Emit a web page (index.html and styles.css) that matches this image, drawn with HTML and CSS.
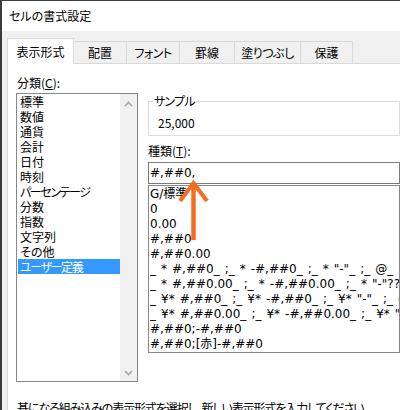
FILE: index.html
```html
<!DOCTYPE html>
<html lang="ja">
<head>
<meta charset="utf-8">
<link rel="stylesheet" href="styles.css">
</head>
<body>
<div class="window">
  <div class="titlebar">セルの書式設定</div>
  <div class="tabstrip">
    <div class="tab tab-active">表示形式</div>
    <div class="tab tab-align">配置</div>
    <div class="tab tab-font">フォント</div>
    <div class="tab tab-border">罫線</div>
    <div class="tab tab-fill">塗りつぶし</div>
    <div class="tab tab-protect">保護</div>
  </div>
  <div class="panel">
    <div class="columns">
      <div class="left">
        <div class="label">分類(<u>C</u>):</div>
        <div class="listbox">
          <ul class="items">
            <li>標準</li>
            <li>数値</li>
            <li>通貨</li>
            <li>会計</li>
            <li>日付</li>
            <li>時刻</li>
            <li class="kana">パーセンテージ</li>
            <li>分数</li>
            <li>指数</li>
            <li>文字列</li>
            <li>その他</li>
            <li class="selected kana">ユーザー定義</li>
          </ul>
          <div class="scrollbar">
            <div class="sb-btn sb-up"><svg width="9" height="6" viewBox="0 0 9 6"><polyline points="1,5 4.5,1.5 8,5" fill="none" stroke="#a6a6a6" stroke-width="1.6"/></svg></div>
            <div class="sb-btn sb-down"><svg width="9" height="6" viewBox="0 0 9 6"><polyline points="1,1 4.5,4.5 8,1" fill="none" stroke="#a6a6a6" stroke-width="1.6"/></svg></div>
          </div>
        </div>
      </div>
      <div class="right">
        <fieldset class="sample">
          <legend>サンプル</legend>
          <div class="sample-value">25,000</div>
        </fieldset>
        <div class="label label-type">種類(<u>T</u>):</div>
        <div class="input">#,##0,</div>
        <ul class="typelist">
          <li>G/標準</li>
          <li>0</li>
          <li>0.00</li>
          <li>#,##0</li>
          <li>#,##0.00</li>
          <li>_ * #,##0_ ;_ * -#,##0_ ;_ * "-"_ ;_ @_ </li>
          <li>_ * #,##0.00_ ;_ * -#,##0.00_ ;_ * "-"??_ ;_ @_ </li>
          <li>_ ¥* #,##0_ ;_ ¥* -#,##0_ ;_ ¥* "-"_ ;_ @_ </li>
          <li>_ ¥* #,##0.00_ ;_ ¥* -#,##0.00_ ;_ ¥* "-"??_ ;_ @_ </li>
          <li>#,##0;-#,##0</li>
          <li>#,##0;[赤]-#,##0</li>
        </ul>
      </div>
    </div>
    <div class="hint">基になる組み込みの表示形式を選択し、新しい表示形式を入力してください。</div>
  </div>
  <svg class="arrow" width="40" height="66" viewBox="0 0 40 66">
    <polyline points="5,23 18.5,5 32,23" fill="none" stroke="#f26d21" stroke-width="4" stroke-linejoin="miter"/>
    <line x1="18.5" y1="6" x2="18.5" y2="62" stroke="#f26d21" stroke-width="4.5"/>
  </svg>
</div>
</body>
</html>
```
FILE: styles.css
```css
* { box-sizing: border-box; }
html, body { margin: 0; padding: 0; }
body {
  width: 400px;
  height: 410px;
  overflow: hidden;
  background: #fff;
  font-family: "Noto Sans CJK JP", "Noto Sans", sans-serif;
  font-size: 12px;
  color: #000;
  font-feature-settings: "palt";
}
.window {
  position: relative;
  width: 400px;
  height: 410px;
  border-top: 1px solid #3c3c3c;
  border-left: 2px solid #3c3c3c;
  background: #f0f0f0;
  display: flex;
  flex-direction: column;
  overflow: hidden;
}
.titlebar {
  height: 30px;
  flex: none;
  background: #fff;
  line-height: 30px;
  padding-left: 7px;
}
.tabstrip {
  height: 32px;
  flex: none;
  display: flex;
  align-items: flex-end;
  padding-left: 5px;
}
.tab {
  height: 22px;
  border-top: 1px solid #d9d9d9;
  border-right: 1px solid #d9d9d9;
  display: flex;
  align-items: center;
  justify-content: center;
  white-space: nowrap;
}
.tab-active {
  width: 67px;
  height: 26px;
  margin-bottom: -1px;
  background: #fff;
  border-left: 1px solid #d9d9d9;
  position: relative;
  z-index: 1;
}
.tab-align { width: 53px; }
.tab-font { width: 53px; letter-spacing: -0.5px; }
.tab-border { width: 55px; }
.tab-fill { width: 66px; letter-spacing: -0.5px; }
.tab-protect { width: 52px; }
.panel {
  flex: 1;
  margin-left: 5px;
  background: #fff;
  border-top: 1px solid #d9d9d9;
  border-left: 1px solid #d9d9d9;
  padding: 11px 0 0 8px;
  overflow: hidden;
}
.columns {
  display: flex;
  gap: 10px;
  align-items: flex-start;
}
.left { width: 122px; flex: none; }
.right { width: 252px; flex: none; margin-top: 18px; }
.label {
  line-height: 15px;
  height: 15px;
  padding-left: 1px;
  white-space: nowrap;
}
.listbox {
  margin-top: 3px;
  height: 289px;
  border: 1px solid #828790;
  display: flex;
}
.items {
  flex: 1;
  margin: 0;
  padding: 0 0 0 1px;
  list-style: none;
}
.items li {
  height: 15px;
  line-height: 15px;
  padding-left: 2px;
  white-space: nowrap;
}
.items li.kana { letter-spacing: -1.4px; }
.items li.selected {
  background: #3399ff;
  color: #fff;
}
.scrollbar {
  width: 17px;
  flex: none;
  background: #f0f0f0;
  display: flex;
  flex-direction: column;
  justify-content: space-between;
}
.sb-btn {
  height: 17px;
  display: flex;
  align-items: center;
  justify-content: center;
}
.sb-up { padding-top: 3px; }
.sample {
  margin: 0;
  padding: 6px 0 5px 4px;
  border: 1px solid #dcdcdc;
  min-width: 0;
}
.sample legend {
  padding: 0 1px;
  line-height: 16px;
  letter-spacing: -0.8px;
}
.sample-value {
  line-height: 15px;
  padding-left: 5px;
}
.label-type { margin-top: 7px; padding-left: 0; }
.input {
  margin-top: 4px;
  height: 22px;
  border: 1px solid #7a7a7a;
  line-height: 20px;
  padding-left: 1px;
  white-space: nowrap;
  font-family: "DejaVu Sans", "Noto Sans CJK JP", sans-serif;
}
.typelist {
  list-style: none;
  margin: 1px 0 0 0;
  padding: 1px 0 0 1px;
  height: 168px;
  border: 1px solid #828790;
  overflow: hidden;
  font-family: "DejaVu Sans", "Noto Sans CJK JP", sans-serif;
  word-spacing: 1.2px;
}
.typelist li {
  height: 15px;
  line-height: 15px;
  white-space: pre;
  overflow: hidden;
}
.hint {
  margin-top: 18px;
  line-height: 15px;
  padding-left: 1px;
  white-space: nowrap;
  letter-spacing: -1.1px;
}
.arrow {
  position: absolute;
  left: 173px;
  top: 177px;
}
```
